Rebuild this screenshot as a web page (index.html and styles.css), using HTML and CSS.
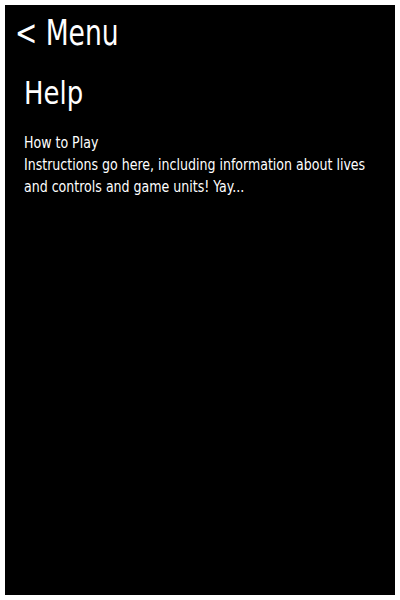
FILE: index.html
```html
<!DOCTYPE html>
<html>
<head>
<meta charset="utf-8">
<link rel="stylesheet" href="styles.css">
</head>
<body>
<div class="screen">
  <div class="nav">&lt; Menu</div>
  <div class="content">
    <h1 class="title">Help</h1>
    <p class="text">How to Play<br>Instructions go here, including information about lives and controls and game units! Yay...</p>
  </div>
</div>
</body>
</html>
```
FILE: styles.css
```css
html { background: #fff; }
body {
  margin: 5px;
  font-family: "DejaVu Sans Condensed", "Liberation Sans", sans-serif;
  color: #fff;
}
.screen {
  background: #000;
  height: 590px;
  box-sizing: border-box;
  padding: 8px 0 0 10px;
}
.nav {
  font-size: 36px;
  line-height: 40px;
  transform: scaleX(0.82);
  transform-origin: left top;
}
.content {
  padding: 0 0 0 9px;
}
.title {
  margin: 22px 0 0 0;
  font-size: 32px;
  font-weight: normal;
  line-height: 36px;
  transform: scaleX(0.9);
  transform-origin: left top;
}
.text {
  width: 395px;
  margin: 21px 0 0 0;
  font-size: 16px;
  line-height: 22px;
  transform: scaleX(0.875);
  transform-origin: left top;
}
```
